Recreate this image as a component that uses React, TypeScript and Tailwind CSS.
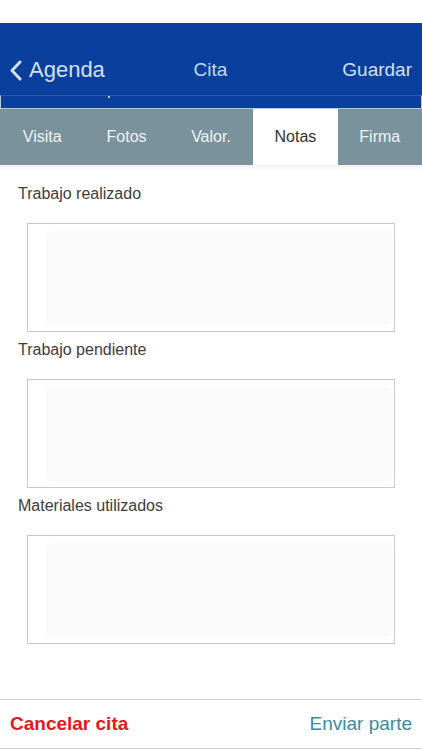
export default function App() {
  const tabs = ["Visita", "Fotos", "Valor.", "Notas", "Firma"];
  const fields = ["Trabajo realizado", "Trabajo pendiente", "Materiales utilizados"];

  return (
    <div className="w-[422px] h-[750px] bg-white flex flex-col font-['Liberation_Sans',Arial,sans-serif]">
      {/* Status bar space */}
      <div className="h-[23px] bg-white" />

      {/* Nav bar */}
      <header className="h-[72px] bg-[#0b3f9e] grid grid-cols-[1fr_auto_1fr] items-end pb-[12px] pl-[9px] pr-[10px] text-[#d5e1f3]">
        <div className="flex items-center gap-[7px]">
          <svg width="13" height="21" viewBox="0 0 13 21" fill="none">
            <path d="M11 2 L3 10.5 L11 19" stroke="#d5e1f3" strokeWidth="3" strokeLinecap="round" strokeLinejoin="round" />
          </svg>
          <span className="text-[22px] leading-[26px]">Agenda</span>
        </div>
        <span className="text-[19px] leading-[26px] text-[#c6d8ef]">Cita</span>
        <span className="text-[19px] leading-[26px] text-right">Guardar</span>
      </header>

      {/* Strip under nav */}
      <div className="h-[14px] bg-[#0b3f9e] border-t border-t-[#3a5590] border-x border-b border-x-[#b9c6e0] border-b-[#b9c6e0] relative">
        <span className="absolute left-[107px] top-[0px] w-[2px] h-[2px] bg-[#b9c6e0]" />
      </div>

      {/* Tabs */}
      <nav className="h-[56px] grid grid-cols-5 bg-[#7a929b]">
        {tabs.map((t) => (
          <div
            key={t}
            className={
              t === "Notas"
                ? "bg-white flex items-center justify-center text-[16px] text-[#333333]"
                : "flex items-center justify-center text-[16px] text-[#eef2f4]"
            }
          >
            {t}
          </div>
        ))}
      </nav>
      <div className="h-[5px] bg-gradient-to-b from-[#f0f0f0] to-white" />

      {/* Fields */}
      <main className="flex-1 flex flex-col">
        {fields.map((f, i) => (
          <div key={f} className={i === 0 ? "mt-[14px]" : "mt-[8px]"}>
            <div className="h-[20px] leading-[20px] pl-[18px] text-[16px] text-[#3d3d3d]">{f}</div>
            <div className="mt-[19px] ml-[27px] w-[368px] h-[109px] border border-[#c9c9c9] pt-[7px] pb-[6px] pl-[18px] pr-[1px]">
              <div className="h-full bg-[#fafafa] rounded-[6px]" />
            </div>
          </div>
        ))}
      </main>

      {/* Bottom bar */}
      <footer className="h-[50px] border-y border-[#cfcfcf] flex items-center justify-between px-[10px] mb-[1px]">
        <span className="text-[19px] font-bold text-[#e8141c]">Cancelar cita</span>
        <span className="text-[19px] text-[#3b8ca0]">Enviar parte</span>
      </footer>
    </div>
  );
}
